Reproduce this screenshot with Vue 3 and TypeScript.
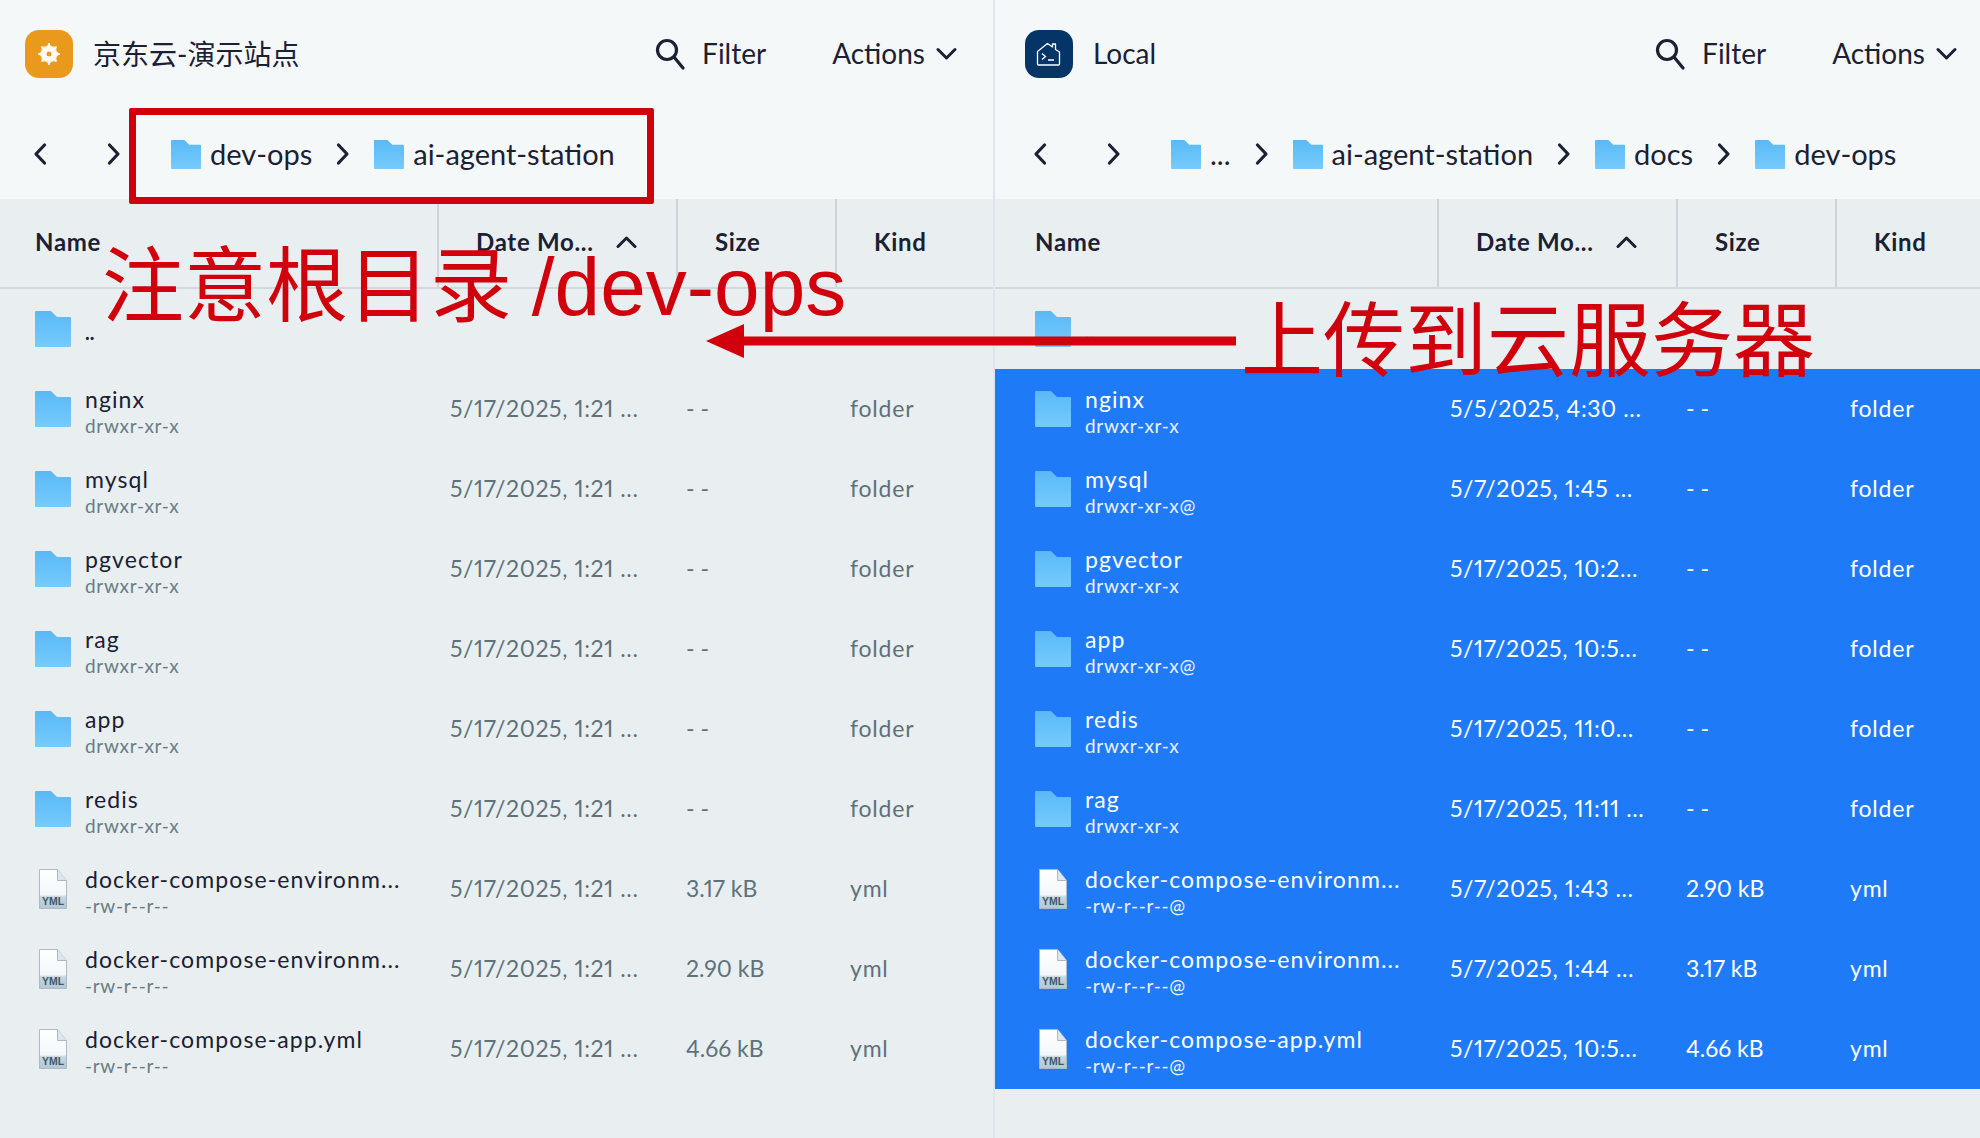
<script setup lang="ts">
interface Row {
  name: string;
  perm: string;
  date: string;
  size: string;
  kind: string;
}

interface Pane {
  key: string;
  title: string;
  crumbs: string[];
  rows: Row[];
}

const dir = (name: string, perm: string, date: string): Row => ({ name, perm, date, size: "- -", kind: "folder" });
const yml = (name: string, perm: string, date: string, size: string): Row => ({ name, perm, date, size, kind: "yml" });

const remoteDate = "5/17/2025, 1:21 ...";
const longName = "docker-compose-environm...";

const panes: Pane[] = [
  {
    key: "remote",
    title: "京东云-演示站点",
    crumbs: ["dev-ops", "ai-agent-station"],
    rows: [
      dir("nginx", "drwxr-xr-x", remoteDate),
      dir("mysql", "drwxr-xr-x", remoteDate),
      dir("pgvector", "drwxr-xr-x", remoteDate),
      dir("rag", "drwxr-xr-x", remoteDate),
      dir("app", "drwxr-xr-x", remoteDate),
      dir("redis", "drwxr-xr-x", remoteDate),
      yml(longName, "-rw-r--r--", remoteDate, "3.17 kB"),
      yml(longName, "-rw-r--r--", remoteDate, "2.90 kB"),
      yml("docker-compose-app.yml", "-rw-r--r--", remoteDate, "4.66 kB"),
    ],
  },
  {
    key: "local",
    title: "Local",
    crumbs: ["...", "ai-agent-station", "docs", "dev-ops"],
    rows: [
      dir("nginx", "drwxr-xr-x", "5/5/2025, 4:30 ..."),
      dir("mysql", "drwxr-xr-x@", "5/7/2025, 1:45 ..."),
      dir("pgvector", "drwxr-xr-x", "5/17/2025, 10:2..."),
      dir("app", "drwxr-xr-x@", "5/17/2025, 10:5..."),
      dir("redis", "drwxr-xr-x", "5/17/2025, 11:0..."),
      dir("rag", "drwxr-xr-x", "5/17/2025, 11:11 ..."),
      yml(longName, "-rw-r--r--@", "5/7/2025, 1:43 ...", "2.90 kB"),
      yml(longName, "-rw-r--r--@", "5/7/2025, 1:44 ...", "3.17 kB"),
      yml("docker-compose-app.yml", "-rw-r--r--@", "5/17/2025, 10:5...", "4.66 kB"),
    ],
  },
];

const folderPath = "M1 0h15l6 6h13a1 1 0 0 1 1 1v28a1 1 0 0 1-1 1H1a1 1 0 0 1-1-1V1a1 1 0 0 1 1-1z";
</script>

<template>
  <div class="page">
    <section v-for="pane in panes" :key="pane.key" class="pane" :class="pane.key">
      <header class="top">
        <div class="title-row">
          <div class="logo">
            <svg v-if="pane.key === 'remote'" width="26" height="26" viewBox="0 0 26 26">
              <g fill="#fff" fill-opacity="0.75">
                <rect x="5.500" y="5.500" width="15" height="15" />
                <rect x="5.500" y="5.500" width="15" height="15" transform="rotate(45 13 13)" />
              </g>
              <path d="M13 2v22M2 13h22M5.500 5.500l15 15M20.500 5.500l-15 15" stroke="#fff" stroke-width="1.600" />
              <circle cx="13" cy="13" r="2.500" fill="#E99A1C" />
            </svg>
            <svg v-else width="26" height="26" viewBox="0 0 26 26" fill="none" stroke="#fff" stroke-width="1.300">
              <path d="M1.500 10.500L11.500 2.500l5 3.500V3h3v5.500l4 2.500v12a1 1 0 0 1-1 1h-20a1 1 0 0 1-1-1z" stroke-linejoin="round" />
              <path d="M6 12.500l3.500 3-3.500 3M12 19h6" />
            </svg>
          </div>
          <span class="title">{{ pane.title }}</span>
          <div class="tools">
            <svg class="search" width="30" height="32" viewBox="0 0 30 32" fill="none" stroke="#1b2033" stroke-width="3.200">
              <circle cx="12" cy="12" r="9.500" />
              <path d="M19 19l9 11" stroke-linecap="round" />
            </svg>
            <span class="filter">Filter</span>
            <span class="actions">Actions</span>
            <svg width="21" height="14" viewBox="0 0 21 14" fill="none" stroke="#1b2033" stroke-width="3" stroke-linecap="round" stroke-linejoin="round">
              <path d="M2 2.500l8.500 8.500 8.500-8.500" />
            </svg>
          </div>
        </div>
        <div class="crumb-row">
          <svg class="nav" width="14" height="24" viewBox="0 0 14 24" fill="none" stroke="#1b2033" stroke-width="3.200" stroke-linecap="round" stroke-linejoin="round">
            <path d="M11.500 3L3 12l8.500 9" />
          </svg>
          <svg class="nav next" width="14" height="24" viewBox="0 0 14 24" fill="none" stroke="#1b2033" stroke-width="3.200" stroke-linecap="round" stroke-linejoin="round">
            <path d="M2.500 3L11 12l-8.500 9" />
          </svg>
          <div class="crumbs">
            <template v-for="(crumb, i) in pane.crumbs" :key="i">
              <svg v-if="i > 0" class="sep" width="14" height="24" viewBox="0 0 14 24" fill="none" stroke="#1b2033" stroke-width="3.200" stroke-linecap="round" stroke-linejoin="round">
                <path d="M2.500 3L11 12l-8.500 9" />
              </svg>
              <svg class="crumb-folder" width="30" height="29" viewBox="0 0 36 36" preserveAspectRatio="none">
                <path :d="folderPath" :fill="`url(#grad-${pane.key})`" />
              </svg>
              <span class="crumb">{{ crumb }}</span>
            </template>
          </div>
        </div>
      </header>

      <div class="head">
        <div class="cell c-name">Name</div>
        <div class="cell c-date">
          <span>Date Mo...</span>
          <svg width="21" height="14" viewBox="0 0 21 14" fill="none" stroke="#1b2033" stroke-width="3" stroke-linecap="round" stroke-linejoin="round">
            <path d="M2 11.500L10.500 3l8.500 8.500" />
          </svg>
        </div>
        <div class="cell c-size">Size</div>
        <div class="cell c-kind">Kind</div>
      </div>

      <div class="row">
        <div class="c-name body-name">
          <svg class="folder" width="36" height="36" viewBox="0 0 36 36">
            <path :d="folderPath" :fill="`url(#grad-${pane.key})`" />
          </svg>
          <span class="updir">..</span>
        </div>
      </div>

      <div class="rows" :class="{ selected: pane.key === 'local' }">
        <div v-for="(row, i) in pane.rows" :key="i" class="row">
          <div class="c-name body-name">
            <svg v-if="row.kind === 'folder'" class="folder" width="36" height="36" viewBox="0 0 36 36">
              <path :d="folderPath" :fill="`url(#grad-${pane.key})`" />
            </svg>
            <svg v-else class="file" width="28" height="40" viewBox="0 0 28 40">
              <path d="M.5.5h18l9 11v28H.5z" :fill="`url(#page-${pane.key})`" stroke="#a9bbc6" />
              <path d="M18.500.5v11h9" fill="#dce6ec" stroke="#a9bbc6" />
              <text x="14" y="36" text-anchor="middle" class="yml-label">YML</text>
            </svg>
            <div class="labels">
              <span class="name">{{ row.name }}</span>
              <span class="perm">{{ row.perm }}</span>
            </div>
          </div>
          <div class="c-date body-cell">{{ row.date }}</div>
          <div class="c-size body-cell">{{ row.size }}</div>
          <div class="c-kind body-cell">{{ row.kind }}</div>
        </div>
      </div>

      <svg class="defs" width="0" height="0">
        <defs>
          <linearGradient :id="`grad-${pane.key}`" x1="0" y1="0" x2="0" y2="1">
            <stop offset="0" stop-color="#5ab9f5" />
            <stop offset="1" stop-color="#75cbfd" />
          </linearGradient>
          <linearGradient :id="`page-${pane.key}`" x1="0" y1="0" x2="0" y2="1">
            <stop offset="0" stop-color="#ffffff" />
            <stop offset="0.65" stop-color="#f3f7f9" />
            <stop offset="0.7" stop-color="#c4d5de" />
            <stop offset="1" stop-color="#b3c8d4" />
          </linearGradient>
        </defs>
      </svg>
    </section>

    <!-- annotations drawn over the screenshot -->
    <div class="mark-box"></div>
    <div class="mark-text note-root">注意根目录 /dev-ops</div>
    <div class="mark-text note-upload">上传到云服务器</div>
    <svg class="mark-arrow" width="530" height="34" viewBox="0 0 530 34">
      <path d="M0 17L38 0v12.500h492v9H38V34z" fill="#d0000d" />
    </svg>
  </div>
</template>

<style scoped>
.page {
  position: relative;
  display: flex;
  width: 1980px;
  height: 1138px;
  overflow: hidden;
  background: #e9eff0;
  color: #1b2033;
  font-family: Lato, "Noto Sans CJK SC", sans-serif;
  font-variant-numeric: proportional-nums;
}

.pane {
  --inset: 0px;
  --right: 36px;
  --name-width: 437px;
  display: flex;
  flex-direction: column;
  flex-shrink: 0;
  min-width: 0;
}

.pane.remote {
  width: 993px;
  border-right: 2px solid #dfe5e8;
}

.pane.local {
  --inset: 5px;
  --right: 23px;
  --name-width: 442px;
  width: 985px;
}

.top {
  height: 199px;
  background: #f4f8f9;
  padding-left: var(--inset);
  padding-right: var(--right);
}

.title-row {
  display: flex;
  align-items: center;
  height: 48px;
  margin-top: 30px;
  padding-left: 25px;
}

.logo {
  display: flex;
  align-items: center;
  justify-content: center;
  width: 48px;
  height: 48px;
  border-radius: 14px;
  background: #e99a1c;
}

.local .logo {
  background: #053566;
}

.title {
  margin-left: 20px;
  padding-bottom: 3px;
  font-size: 28px;
}

.tools {
  display: flex;
  align-items: center;
  margin-left: auto;
  font-size: 28px;
}

.tools span {
  padding-bottom: 3px;
}

.search {
  margin-right: 17px;
}

.filter {
  margin-right: 66px;
}

.actions {
  margin-right: 11px;
}

.crumb-row {
  display: flex;
  align-items: center;
  height: 40px;
  margin-top: 56px;
  padding-left: 33px;
}

.nav.next {
  margin-left: 60px;
}

.crumbs {
  display: flex;
  align-items: center;
  margin-left: 50px;
  font-size: 29px;
}

.crumb {
  padding-bottom: 2px;
}

.crumb-folder {
  margin-right: 9px;
}

.sep {
  margin: 0 24px;
}

.head {
  display: flex;
  height: 88px;
  background: #e9eff0;
  border-bottom: 2px solid #d3dade;
  padding-left: var(--inset);
  font-size: 24px;
  letter-spacing: 0.7px;
  font-weight: 700;
}

.c-name {
  width: var(--name-width);
  flex-shrink: 0;
  margin-left: calc(var(--inset) * -1);
  padding-left: calc(35px + var(--inset));
}

.c-date {
  width: 239px;
  flex-shrink: 0;
  padding-left: 37px;
}

.c-size {
  width: 159px;
  flex-shrink: 0;
  padding-left: 37px;
}

.c-kind {
  flex: 1;
  min-width: 0;
  padding-left: 37px;
}

.cell {
  display: flex;
  align-items: center;
  padding-bottom: 3px;
  box-sizing: border-box;
}

.cell + .cell {
  border-left: 2px solid #cdd5da;
}

.c-date.cell {
  gap: 22px;
}

.row {
  display: flex;
  align-items: center;
  height: 80px;
  padding-left: var(--inset);
  box-sizing: border-box;
}

.rows.selected {
  background: #1f7af7;
  color: #fff;
}

.c-name,
.c-date,
.c-size,
.c-kind {
  box-sizing: border-box;
}

.body-name {
  position: relative;
  display: flex;
  align-items: center;
}

.body-cell {
  margin-bottom: 2px;
  font-size: 23px;
  color: #5f717b;
  padding-left: 13px;
  white-space: nowrap;
}

.c-date.body-cell {
  letter-spacing: 0.6px;
}

.c-size.body-cell {
  padding-left: 10px;
}

.c-kind.body-cell {
  padding-left: 15px;
  letter-spacing: 0.8px;
}

.selected .body-cell {
  color: #fff;
}

.folder {
  margin-right: 14px;
  flex-shrink: 0;
}

.file {
  margin: 0 18px 0 4px;
  flex-shrink: 0;
}

.yml-label {
  font-family: "Liberation Sans", sans-serif;
  font-size: 10.500px;
  font-weight: 700;
  fill: #3f5a68;
}

.updir {
  align-self: flex-end;
  margin-bottom: 5px;
  font-size: 20px;
  font-weight: 700;
  line-height: 1;
}

.labels {
  display: flex;
  flex-direction: column;
  padding-top: 4px;
  white-space: nowrap;
}

.name {
  font-size: 23px;
  line-height: 29px;
  letter-spacing: 1.1px;
}

.perm {
  font-size: 19px;
  line-height: 24px;
  letter-spacing: 0.7px;
  color: #6b7c85;
}

.selected .perm {
  color: #e8f1fe;
}

.defs {
  position: absolute;
}

.mark-box {
  position: absolute;
  left: 129px;
  top: 108px;
  width: 525px;
  height: 96px;
  box-sizing: border-box;
  border: 7px solid #d0000d;
  border-radius: 2px;
}

.mark-text {
  position: absolute;
  color: #d0000d;
  font-family: "Liberation Sans", "Noto Sans CJK SC", sans-serif;
  font-size: 82px;
  line-height: 96px;
  white-space: nowrap;
}

.note-root {
  left: 102px;
  top: 239px;
  word-spacing: -3px;
}

.note-upload {
  left: 1241px;
  top: 294px;
}

.mark-arrow {
  position: absolute;
  left: 706px;
  top: 324px;
}
</style>
